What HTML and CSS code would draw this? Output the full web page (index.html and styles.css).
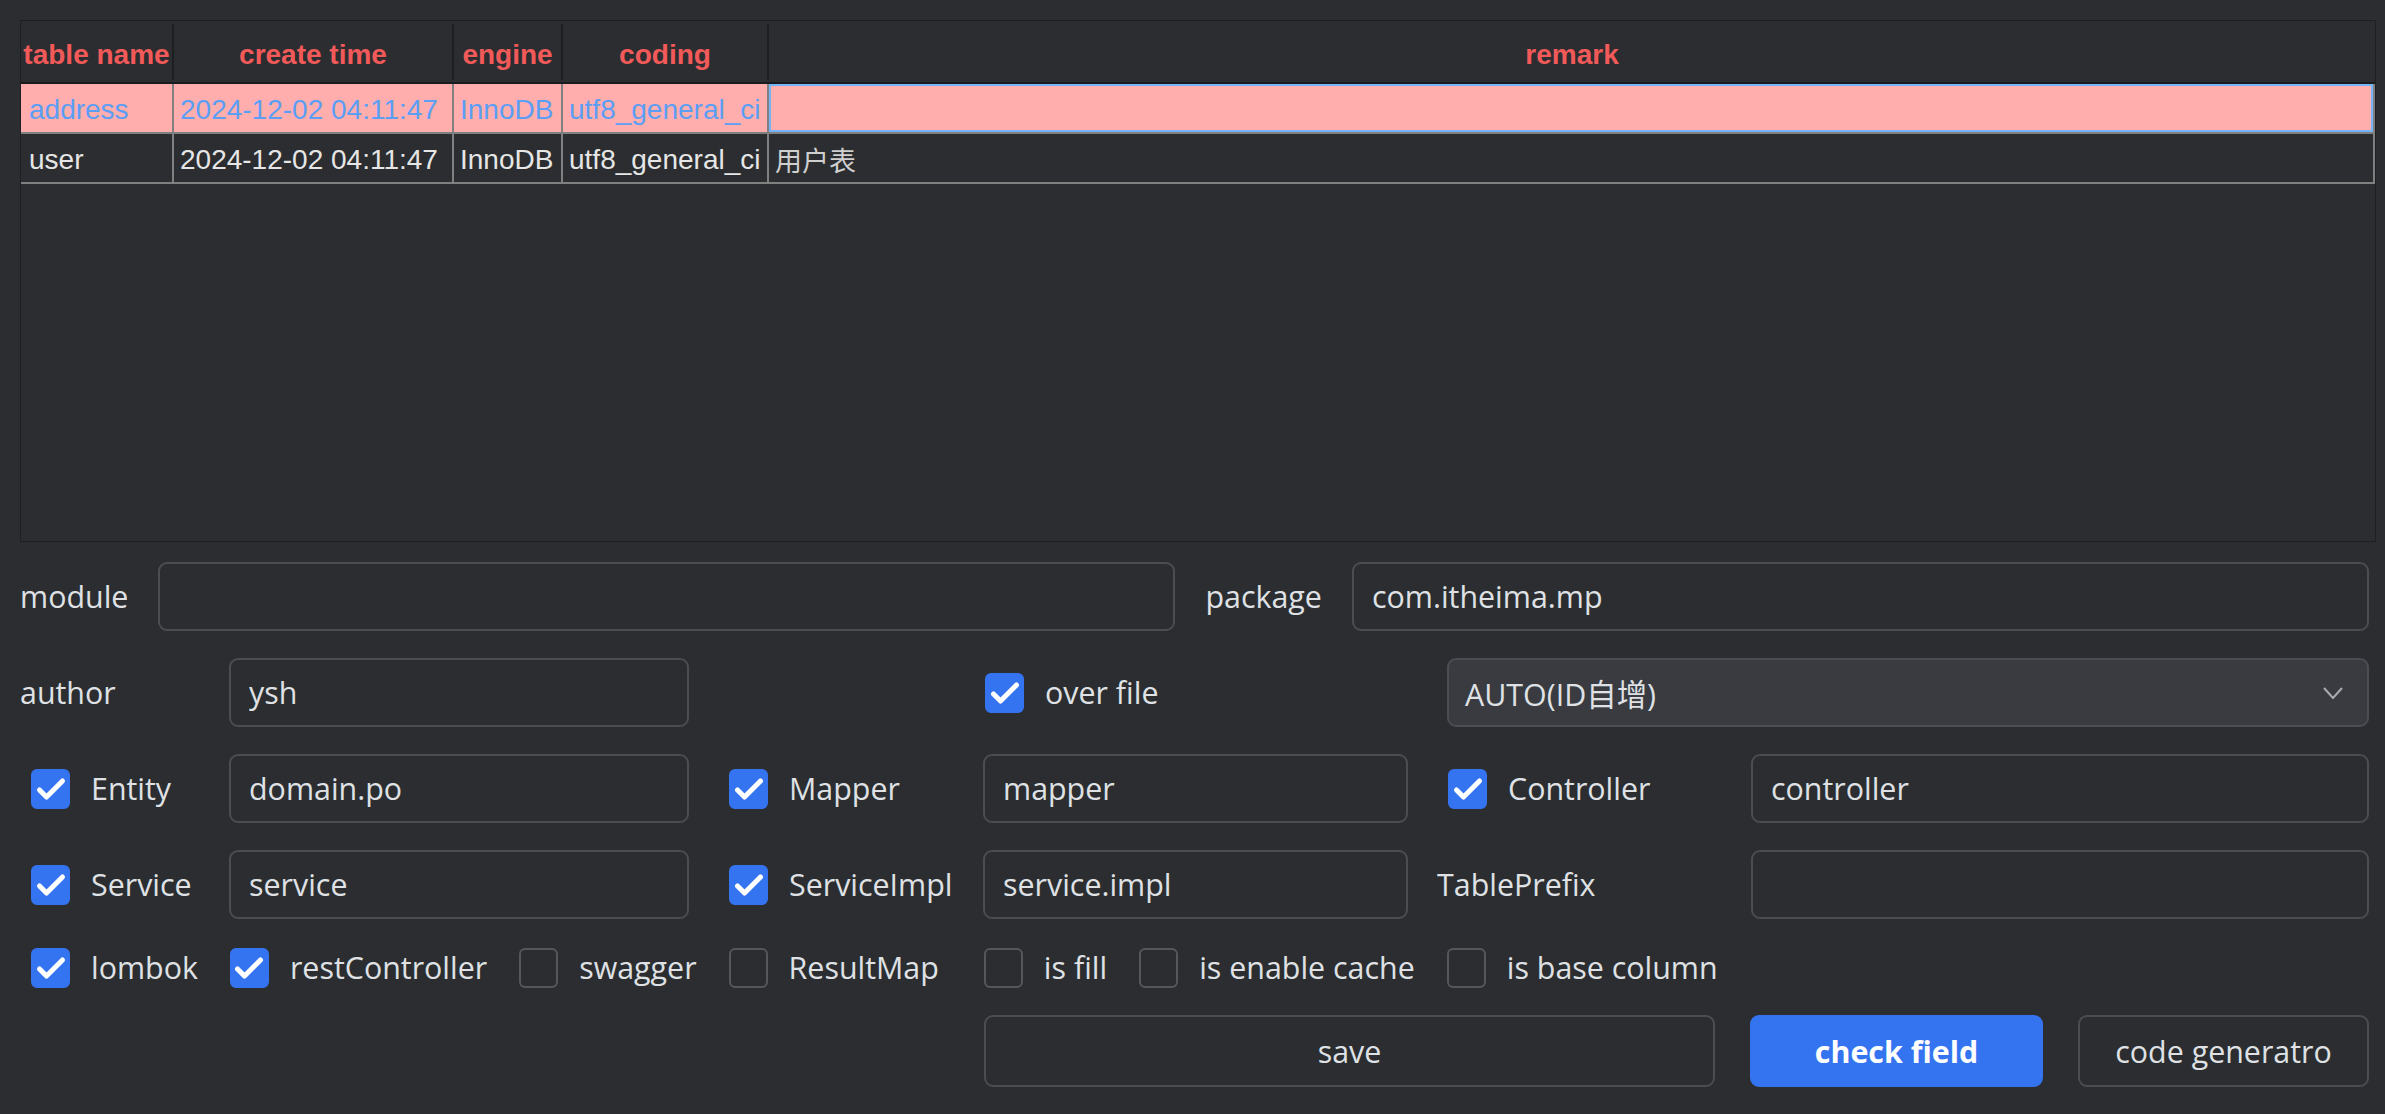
FILE: index.html
```html
<!DOCTYPE html>
<html lang="en">
<head>
<meta charset="utf-8">
<title>Code Generator</title>
<link rel="stylesheet" href="styles.css">
</head>
<body>
<div class="app">
  <div class="table-box">
    <div class="thead">
      <div class="th">table name</div>
      <div class="th">create time</div>
      <div class="th">engine</div>
      <div class="th">coding</div>
      <div class="th last">remark</div>
    </div>
    <div class="tr selected">
      <div class="td first">address</div>
      <div class="td">2024-12-02 04:11:47</div>
      <div class="td">InnoDB</div>
      <div class="td">utf8_general_ci</div>
      <div class="td focus"></div>
    </div>
    <div class="tr">
      <div class="td first">user</div>
      <div class="td">2024-12-02 04:11:47</div>
      <div class="td">InnoDB</div>
      <div class="td">utf8_general_ci</div>
      <div class="td cjk">用户表</div>
    </div>
  </div>

  <div class="form">
    <div class="module-row">
      <span class="label">module</span>
      <input class="field" type="text" value="">
      <span class="label">package</span>
      <input class="field" type="text" value="com.itheima.mp">
    </div>

    <div class="grid">
      <span class="label">author</span>
      <input class="field" type="text" value="ysh">
      <span class="cell-empty"></span>
      <label class="check at-d"><span class="box on"><svg viewBox="0 0 40 40"><path d="M8.5 21 L15.5 28 L31.5 12"/></svg></span><span class="label">over file</span></label>
      <div class="select"><span class="select-text">AUTO(ID自增)</span><svg class="chev" viewBox="0 0 20 12"><path d="M1 1 L10 11 L19 1"/></svg></div>

      <label class="check at-a"><span class="box on"><svg viewBox="0 0 40 40"><path d="M8.5 21 L15.5 28 L31.5 12"/></svg></span><span class="label">Entity</span></label>
      <input class="field" type="text" value="domain.po">
      <label class="check at-a"><span class="box on"><svg viewBox="0 0 40 40"><path d="M8.5 21 L15.5 28 L31.5 12"/></svg></span><span class="label">Mapper</span></label>
      <input class="field" type="text" value="mapper">
      <label class="check at-a"><span class="box on"><svg viewBox="0 0 40 40"><path d="M8.5 21 L15.5 28 L31.5 12"/></svg></span><span class="label">Controller</span></label>
      <input class="field" type="text" value="controller">

      <label class="check at-a"><span class="box on"><svg viewBox="0 0 40 40"><path d="M8.5 21 L15.5 28 L31.5 12"/></svg></span><span class="label">Service</span></label>
      <input class="field" type="text" value="service">
      <label class="check at-a"><span class="box on"><svg viewBox="0 0 40 40"><path d="M8.5 21 L15.5 28 L31.5 12"/></svg></span><span class="label">ServiceImpl</span></label>
      <input class="field" type="text" value="service.impl">
      <span class="label">TablePrefix</span>
      <input class="field" type="text" value="">
    </div>

    <div class="checks">
      <label class="check"><span class="box on"><svg viewBox="0 0 40 40"><path d="M8.5 21 L15.5 28 L31.5 12"/></svg></span><span class="label">lombok</span></label>
      <label class="check"><span class="box on"><svg viewBox="0 0 40 40"><path d="M8.5 21 L15.5 28 L31.5 12"/></svg></span><span class="label">restController</span></label>
      <label class="check"><span class="box"></span><span class="label">swagger</span></label>
      <label class="check"><span class="box"></span><span class="label">ResultMap</span></label>
      <label class="check wide"><span class="box"></span><span class="label">is fill</span></label>
      <label class="check"><span class="box"></span><span class="label">is enable cache</span></label>
      <label class="check"><span class="box"></span><span class="label">is base column</span></label>
    </div>

    <div class="buttons">
      <button class="btn save">save</button>
      <button class="btn primary">check field</button>
      <button class="btn gen">code generatro</button>
    </div>
  </div>
</div>
</body>
</html>
```

FILE: styles.css
```css
* { box-sizing: border-box; }

html, body {
  margin: 0;
  padding: 0;
  background: #2b2d30;
}

body {
  width: 2385px;
  height: 1114px;
  overflow: hidden;
  font-family: "Open Sans", "Noto Sans CJK SC", sans-serif;
  color: #dfe1e5;
}

.app {
  width: 2385px;
  height: 1114px;
  padding: 20px 16px 0 20px;
  border-radius: 0 0 10px 10px;
}

/* ---------- table ---------- */
.table-box {
  width: 2356px;
  height: 522px;
  border: 1px solid #1e1f22;
  background: #2b2d30;
  font-family: "Liberation Sans", Arial, sans-serif;
  font-size: 28px;
}

.thead,
.tr {
  display: grid;
  grid-template-columns: 153px 280px 109px 206px 1fr;
}

.thead {
  height: 63px;
  padding: 3px 0 2px;
  border-bottom: 2px solid #1a1b1e;
}

.th {
  line-height: 50px;
  padding-top: 6px;
  text-align: center;
  font-weight: bold;
  color: #f25a5a;
  border-right: 2px solid #1e1f22;
  white-space: nowrap;
  overflow: hidden;
}

.th.last { border-right: none; }

.tr {
  height: 50px;
  border-bottom: 2px solid #808080;
  color: #e6e6e6;
}

.td {
  line-height: 48px;
  padding: 2px 6px 0;
  border-right: 2px solid #808080;
  white-space: nowrap;
  overflow: hidden;
}

.td.first { padding-left: 8px; }

.tr.selected {
  background: #ffadad;
  color: #5a9ef5;
}

.td.focus {
  box-shadow: inset 0 0 0 2px #75b5f7;
}

.td.cjk {
  font-family: "Noto Sans CJK SC", sans-serif;
  font-size: 27px;
  color: #cfcfcf;
  padding-left: 6px;
}

/* ---------- form ---------- */
.form {
  margin-top: 20px;
  display: flex;
  flex-direction: column;
  gap: 27px;
  width: 2349px;
}

.label {
  font-size: 30.4px;
  line-height: 40px;
  color: #dfe1e5;
  white-space: nowrap;
}

.field {
  height: 69px;
  min-width: 0;
  border: 2px solid #4b4d52;
  border-radius: 9px;
  background: transparent;
  color: #dfe1e5;
  font-family: "Open Sans", "Noto Sans CJK SC", sans-serif;
  font-size: 30.4px;
  padding: 0 18px;
  outline: none;
}

.module-row {
  display: flex;
  align-items: center;
  gap: 30px;
  height: 69px;
}

.module-row .field { flex: 1; }

.grid {
  display: grid;
  grid-template-columns: 180px 460px 236px 425px 285px 1fr;
  grid-auto-rows: 69px;
  column-gap: 29px;
  row-gap: 27px;
  align-items: center;
}

.grid .field { width: 100%; }

.check {
  display: flex;
  align-items: center;
  gap: 21px;
}

.check.at-a { margin-left: 11px; }
.check.at-d { margin-left: 2px; }

.box {
  width: 39px;
  height: 40px;
  flex: none;
  border: 2px solid #55575c;
  border-radius: 6px;
  display: flex;
  align-items: center;
  justify-content: center;
}

.box.on {
  background: #3574f0;
  border-color: #3574f0;
}

.box svg {
  width: 40px;
  height: 40px;
  flex: none;
}

.box svg path {
  fill: none;
  stroke: #ffffff;
  stroke-width: 5;
  stroke-linecap: round;
  stroke-linejoin: round;
}

.select {
  grid-column: 5 / span 2;
  margin-left: 10px;
  height: 69px;
  border: 2px solid #4b4d52;
  border-radius: 9px;
  background: #393b40;
  display: flex;
  align-items: center;
  justify-content: space-between;
  padding: 0 24px 0 16px;
}

.select-text {
  font-size: 30.4px;
  color: #dfe1e5;
  white-space: nowrap;
}

.chev {
  width: 20px;
  height: 12px;
}

.chev path {
  fill: none;
  stroke: #a8abb0;
  stroke-width: 2;
}

.checks {
  display: flex;
  align-items: center;
  gap: 32px;
  height: 40px;
  margin-top: 2px;
  padding-left: 11px;
}

.checks .check.wide { margin-left: 13px; }

.buttons {
  display: flex;
  justify-content: flex-end;
  gap: 35px;
  height: 72px;
}

.btn {
  height: 72px;
  border: 2px solid #4b4d52;
  border-radius: 9px;
  background: transparent;
  color: #dfe1e5;
  font-family: "Open Sans", sans-serif;
  font-size: 30.4px;
  padding: 0;
}

.btn.save { width: 731px; }
.btn.gen { width: 291px; }

.btn.primary {
  width: 293px;
  background: #3574f0;
  border-color: #3574f0;
  color: #ffffff;
  font-weight: bold;
}
```
